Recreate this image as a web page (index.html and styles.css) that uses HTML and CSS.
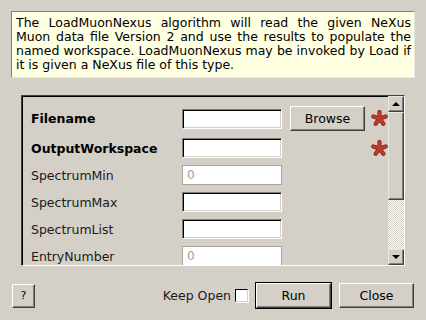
FILE: index.html
```html
<!DOCTYPE html>
<html lang="en">
<head>
    <meta charset="UTF-8">
    <meta name="viewport" content="width=device-width, initial-scale=1.0">
    <title>LoadMuonNexus</title>
    <link rel="stylesheet" href="styles.css">
</head>
<body>
    <div class="dialog">
        <p class="desc">The LoadMuonNexus algorithm will read the given NeXus Muon data file Version 2 and use the results to populate the named workspace. LoadMuonNexus may be invoked by Load if it is given a NeXus file of this type.</p>

        <div class="panel">
            <div class="props">
                <label class="name bold">Filename</label>
                <input class="field" type="text">
                <button class="btn browse">Browse</button>
                <span class="star">
                    <svg width="17" height="17" viewBox="0 0 17 17">
                        <g stroke="#7a2a22" stroke-width="4.2" stroke-linecap="round">
                            <path d="M8.5 8.5 L8.5 2 M8.5 8.5 L14.7 6.5 M8.5 8.5 L12.3 13.8 M8.5 8.5 L4.7 13.8 M8.5 8.5 L2.3 6.5"/>
                        </g>
                        <g stroke="#c0392b" stroke-width="2.8" stroke-linecap="round">
                            <path d="M8.5 8.5 L8.5 2 M8.5 8.5 L14.7 6.5 M8.5 8.5 L12.3 13.8 M8.5 8.5 L4.7 13.8 M8.5 8.5 L2.3 6.5"/>
                        </g>
                    </svg>
                </span>

                <label class="name bold">OutputWorkspace</label>
                <input class="field" type="text">
                <span></span>
                <span class="star">
                    <svg width="17" height="17" viewBox="0 0 17 17">
                        <g stroke="#7a2a22" stroke-width="4.2" stroke-linecap="round">
                            <path d="M8.5 8.5 L8.5 2 M8.5 8.5 L14.7 6.5 M8.5 8.5 L12.3 13.8 M8.5 8.5 L4.7 13.8 M8.5 8.5 L2.3 6.5"/>
                        </g>
                        <g stroke="#c0392b" stroke-width="2.8" stroke-linecap="round">
                            <path d="M8.5 8.5 L8.5 2 M8.5 8.5 L14.7 6.5 M8.5 8.5 L12.3 13.8 M8.5 8.5 L4.7 13.8 M8.5 8.5 L2.3 6.5"/>
                        </g>
                    </svg>
                </span>

                <label class="name">SpectrumMin</label>
                <input class="field dim" type="text" placeholder="0">
                <span></span><span></span>

                <label class="name">SpectrumMax</label>
                <input class="field" type="text">
                <span></span><span></span>

                <label class="name">SpectrumList</label>
                <input class="field" type="text">
                <span></span><span></span>

                <label class="name">EntryNumber</label>
                <input class="field dim" type="text" placeholder="0">
                <span></span><span></span>
            </div>

            <div class="scrollbar">
                <div class="sb-btn"><span class="arrow up"></span></div>
                <div class="sb-thumb"></div>
                <div class="sb-track"></div>
                <div class="sb-btn"><span class="arrow down"></span></div>
            </div>
        </div>

        <div class="actions">
            <button class="btn help">?</button>
            <span class="spacer"></span>
            <label class="keep">Keep Open</label>
            <span class="check"></span>
            <div class="default"><button class="btn run">Run</button></div>
            <button class="btn close">Close</button>
        </div>
    </div>
</body>
</html>
```
FILE: styles.css
```css
/* Reset */
* {
    margin: 0;
    padding: 0;
    box-sizing: border-box;
}

body {
    width: 426px;
    height: 320px;
    overflow: hidden;
    background-color: #d4d0c8;
    font-family: "DejaVu Sans", Verdana, sans-serif;
    font-size: 12.5px;
    color: #000;
}

/* Descricao do algoritmo */
.desc {
    margin: 11px 11px 0;
    padding: 4px 3px 5px 4px;
    height: 67px;
    background-color: #ffffe1;
    border: 1px solid;
    border-color: #808080 #e8e6e0 #e8e6e0 #808080;
    line-height: 14px;
    text-align: justify;
}

/* Painel de propriedades */
.panel {
    display: flex;
    margin: 17px 21px 0;
    height: 171px;
    border: 1px solid;
    border-color: #404040 #fff #fff #404040;
    box-shadow: inset 1px 1px 0 #000;
    overflow: hidden;
}

.props {
    flex: 1;
    display: grid;
    grid-template-columns: 143px 100px 75px 17px;
    grid-auto-rows: 20px;
    grid-template-rows: 25px;
    column-gap: 8px;
    row-gap: 7px;
    align-items: center;
    padding: 10px 0 0 9px;
    overflow: hidden;
}

.name {
    color: #1a1a1a;
    white-space: nowrap;
}

.bold {
    font-weight: bold;
    color: #000;
}

.field {
    width: 100px;
    height: 20px;
    padding: 0 4px;
    background: #fff;
    border: 1px solid;
    border-color: #808080 #fff #fff #808080;
    box-shadow: inset 1px 1px 0 #000, inset -1px -1px 0 #d4d0c8;
    font-family: inherit;
    font-size: 12px;
    outline: none;
}

.field.dim {
    border-color: #a8a59e;
    box-shadow: none;
}

.field::placeholder {
    color: #a0a0a0;
}

.star {
    display: flex;
    margin-left: -2px;
}

/* Botoes */
.btn {
    background-color: #d4d0c8;
    border: 1px solid;
    border-color: #fff #404040 #404040 #fff;
    box-shadow: inset -1px -1px 0 #808080;
    font-family: inherit;
    font-size: 12.5px;
    color: #000;
}

.browse {
    width: 75px;
    height: 25px;
}

/* Barra de rolagem */
.scrollbar {
    width: 16px;
    display: flex;
    flex-direction: column;
}

.sb-btn,
.sb-thumb {
    background-color: #d4d0c8;
    border: 1px solid;
    border-color: #e8e6e0 #404040 #404040 #e8e6e0;
    box-shadow: inset -1px -1px 0 #808080;
}

.sb-btn {
    height: 16px;
    display: flex;
    align-items: center;
    justify-content: center;
}

.sb-thumb {
    height: 88px;
}

.sb-track {
    flex: 1;
    background-image: repeating-conic-gradient(#fff 0 25%, #d4d0c8 0 50%);
    background-size: 2px 2px;
}

.arrow {
    width: 0;
    height: 0;
    border-left: 4px solid transparent;
    border-right: 4px solid transparent;
}

.arrow.up {
    border-bottom: 4px solid #000;
}

.arrow.down {
    border-top: 4px solid #000;
}

/* Rodape */
.actions {
    display: flex;
    align-items: center;
    margin-top: 16px;
    padding: 0 12px;
    height: 27px;
}

.help {
    width: 23px;
    height: 24px;
    font-size: 11px;
}

.spacer {
    flex: 1;
}

.keep {
    color: #1a1a1a;
}

.check {
    width: 13px;
    height: 13px;
    margin-left: 4px;
    background: #fff;
    border: 1px solid;
    border-color: #000 #d4d0c8 #d4d0c8 #000;
    box-shadow: 1px 1px 0 #fff;
}

.default {
    margin-left: 7px;
    border: 1px solid #000;
}

.run {
    display: block;
    width: 75px;
    height: 25px;
}

.close {
    margin-left: 7px;
    width: 75px;
    height: 25px;
}
```
